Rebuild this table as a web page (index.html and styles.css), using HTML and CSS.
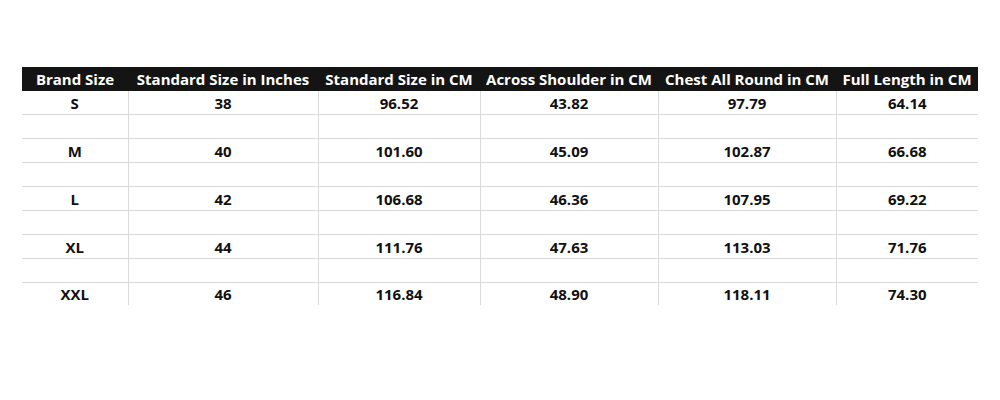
FILE: index.html
```html
<!DOCTYPE html>
<html>
<head>
<meta charset="utf-8">
<link rel="stylesheet" href="styles.css">
</head>
<body>
<div class="wrap">
<table class="size-table">
  <colgroup>
    <col class="c1"><col class="c2"><col class="c3"><col class="c4"><col class="c5"><col class="c6">
  </colgroup>
  <thead>
    <tr>
      <th>Brand Size</th><th>Standard Size in Inches</th><th>Standard Size in CM</th><th>Across Shoulder in CM</th><th>Chest All Round in CM</th><th>Full Length in CM</th>
    </tr>
  </thead>
  <tbody>
    <tr><td>S</td><td>38</td><td>96.52</td><td>43.82</td><td>97.79</td><td>64.14</td></tr>
    <tr class="gap"><td></td><td></td><td></td><td></td><td></td><td></td></tr>
    <tr><td>M</td><td>40</td><td>101.60</td><td>45.09</td><td>102.87</td><td>66.68</td></tr>
    <tr class="gap"><td></td><td></td><td></td><td></td><td></td><td></td></tr>
    <tr><td>L</td><td>42</td><td>106.68</td><td>46.36</td><td>107.95</td><td>69.22</td></tr>
    <tr class="gap"><td></td><td></td><td></td><td></td><td></td><td></td></tr>
    <tr><td>XL</td><td>44</td><td>111.76</td><td>47.63</td><td>113.03</td><td>71.76</td></tr>
    <tr class="gap"><td></td><td></td><td></td><td></td><td></td><td></td></tr>
    <tr class="last"><td>XXL</td><td>46</td><td>116.84</td><td>48.90</td><td>118.11</td><td>74.30</td></tr>
  </tbody>
</table>
</div>
</body>
</html>
```
FILE: styles.css
```css
html, body {
  margin: 0;
  padding: 0;
  background: #ffffff;
}
.wrap {
  padding: 67px 0 0 22px;
}
.size-table {
  width: 956px;
  border-collapse: collapse;
  table-layout: fixed;
  font-family: "Open Sans", Lato, sans-serif;
  font-weight: 700;
  font-size: 15px;
}
.c1 { width: 106px; }
.c2 { width: 190px; }
.c3 { width: 162px; }
.c4 { width: 178px; }
.c5 { width: 178px; }
.c6 { width: 142px; }
.size-table th {
  background: #141414;
  color: #ffffff;
  height: 24px;
  padding: 0;
  text-align: center;
  white-space: nowrap;
  font-weight: 700;
}
.size-table td {
  height: 23px;
  padding: 0;
  text-align: center;
  color: #111111;
  border-bottom: 1px solid #dadada;
  border-left: 1px solid #dadada;
}
.size-table td:first-child {
  border-left: none;
}
.size-table tr.last td {
  border-bottom: none;
  height: 22px;
}
```
